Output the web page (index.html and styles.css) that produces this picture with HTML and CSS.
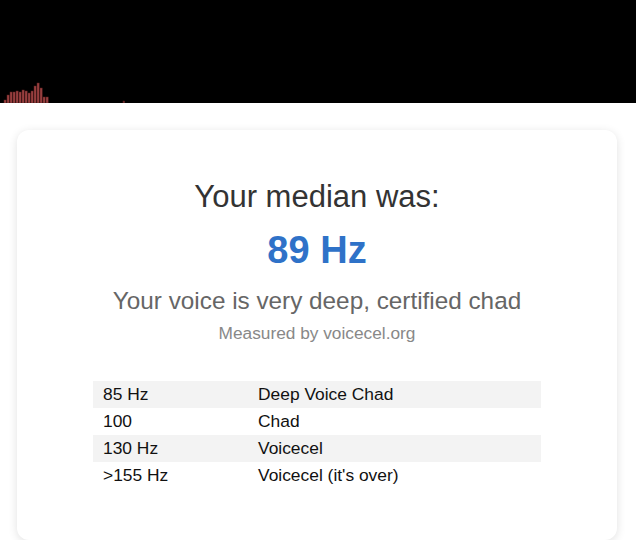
FILE: index.html
```html
<!DOCTYPE html>
<html lang="en">
<head>
<meta charset="utf-8">
<title>Voicecel result</title>
<link rel="stylesheet" href="styles.css">
</head>
<body>
<div class="visualizer">
  <svg class="bars" width="636" height="103" viewBox="0 0 636 103">
    <g fill="#9a4040" stroke="#5a1f1f" stroke-width="0.5">
      <rect x="4" y="100" width="2.2" height="3"/>
      <rect x="7" y="95" width="2.2" height="8"/>
      <rect x="10" y="92" width="2.2" height="11"/>
      <rect x="13" y="92" width="2.2" height="11"/>
      <rect x="16" y="91" width="2.2" height="12"/>
      <rect x="19" y="92" width="2.2" height="11"/>
      <rect x="22" y="90" width="2.2" height="13"/>
      <rect x="25" y="91" width="2.2" height="12"/>
      <rect x="28" y="93" width="2.2" height="10"/>
      <rect x="31" y="91" width="2.2" height="12"/>
      <rect x="34" y="86" width="2.2" height="17"/>
      <rect x="37" y="83" width="2.2" height="20"/>
      <rect x="40" y="88" width="2.2" height="15"/>
      <rect x="43" y="97" width="2.2" height="6"/>
      <rect x="46" y="97" width="2.2" height="6"/>
      <rect x="123" y="101" width="1.5" height="2"/>
    </g>
  </svg>
</div>
<main class="card">
  <h1 class="title">Your median was:</h1>
  <div class="result">89 Hz</div>
  <p class="verdict">Your voice is very deep, certified chad</p>
  <p class="credit">Measured by voicecel.org</p>
  <table class="scale">
    <tr class="shade"><td class="hz">85 Hz</td><td>Deep Voice Chad</td></tr>
    <tr><td class="hz">100</td><td>Chad</td></tr>
    <tr class="shade"><td class="hz">130 Hz</td><td>Voicecel</td></tr>
    <tr><td class="hz">&gt;155 Hz</td><td>Voicecel (it's over)</td></tr>
  </table>
</main>
</body>
</html>
```
FILE: styles.css
```css
html, body {
  margin: 0;
  padding: 0;
  background: #ffffff;
  font-family: "Liberation Sans", Arial, sans-serif;
}

.visualizer {
  height: 103px;
  background: #000000;
  overflow: hidden;
}

.bars {
  display: block;
}

.card {
  width: 600px;
  box-sizing: border-box;
  margin: 27px 0 0 17px;
  padding: 49px 0 51px;
  background: #ffffff;
  border-radius: 12px;
  box-shadow: 0 2px 10px rgba(0, 0, 0, 0.12);
  display: flex;
  flex-direction: column;
  align-items: center;
}

.title {
  margin: 0;
  font-size: 31px;
  font-weight: normal;
  color: #333333;
}

.result {
  margin-top: 14px;
  font-size: 38px;
  font-weight: bold;
  color: #2f72c8;
}

.verdict {
  margin: 15px 0 0;
  font-size: 24.3px;
  color: #666666;
}

.credit {
  margin: 8px 0 0;
  font-size: 17.3px;
  color: #888888;
}

.scale {
  margin-top: 37px;
  width: 448px;
  border-collapse: collapse;
  font-size: 17.4px;
  color: #111111;
}

.scale td {
  padding: 4px 10px;
  height: 19px;
  line-height: 19px;
  text-align: left;
}

.scale .hz {
  width: 135px;
}

.scale .shade {
  background: #f3f3f3;
}
```
